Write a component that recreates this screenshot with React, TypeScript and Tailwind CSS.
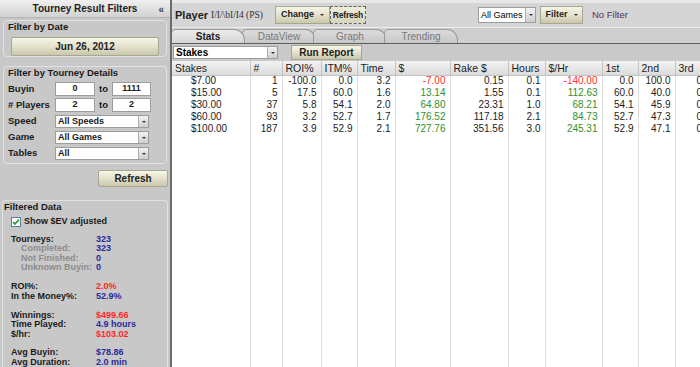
import React from "react";

const rows = [
  { stake: "$7.00", n: "1", roi: "-100.0", itm: "0.0", time: "3.2", usd: "-7.00", rake: "0.15", hours: "0.1", hr: "-140.00", first: "0.0", second: "100.0", third: "0.0" },
  { stake: "$15.00", n: "5", roi: "17.5", itm: "60.0", time: "1.6", usd: "13.14", rake: "1.55", hours: "0.1", hr: "112.63", first: "60.0", second: "40.0", third: "0.0" },
  { stake: "$30.00", n: "37", roi: "5.8", itm: "54.1", time: "2.0", usd: "64.80", rake: "23.31", hours: "1.0", hr: "68.21", first: "54.1", second: "45.9", third: "0.0" },
  { stake: "$60.00", n: "93", roi: "3.2", itm: "52.7", time: "1.7", usd: "176.52", rake: "117.18", hours: "2.1", hr: "84.73", first: "52.7", second: "47.3", third: "0.0" },
  { stake: "$100.00", n: "187", roi: "3.9", itm: "52.9", time: "2.1", usd: "727.76", rake: "351.56", hours: "3.0", hr: "245.31", first: "52.9", second: "47.1", third: "0.0" },
];

const columns = [
  { label: "Stakes", w: 78 },
  { label: "#", w: 32 },
  { label: "ROI%", w: 39 },
  { label: "ITM%", w: 36 },
  { label: "Time", w: 38 },
  { label: "$", w: 55 },
  { label: "Rake $", w: 58 },
  { label: "Hours", w: 37 },
  { label: "$/Hr", w: 57 },
  { label: "1st", w: 36 },
  { label: "2nd", w: 37 },
  { label: "3rd", w: 40 },
];

const beige = "bg-gradient-to-b from-[#f6f5e8] via-[#e4e2cc] to-[#c9c7ab] border border-[#a9a790] font-bold text-[#222]";

function DropArrow() {
  return (
    <div className="w-[10px] h-full border-l border-[#b0b0b0] bg-gradient-to-b from-[#f2f2f2] to-[#d0d0d0] flex items-center justify-center">
      <div className="w-0 h-0 border-l-[2px] border-r-[2px] border-t-[2px] border-l-transparent border-r-transparent border-t-[#333]" />
    </div>
  );
}

function Select({ text, w, bold = true }: { text: string; w: string; bold?: boolean }) {
  return (
    <div className={`${w} h-full bg-white border border-[#9c9c9c] flex items-center`}>
      <span className={`flex-1 pl-[2px] leading-none whitespace-nowrap overflow-hidden ${bold ? "font-bold" : ""}`}>{text}</span>
      <DropArrow />
    </div>
  );
}

function Stat({ label, value, tone = "blue", sub = false }: { label: string; value: string; tone?: "blue" | "red"; sub?: boolean }) {
  const color = tone === "red" ? "text-[#ff2626]" : "text-[#2a2a9c]";
  return (
    <div className="flex h-[9.5px] items-center leading-none">
      <span className={`w-[85px] ${sub ? "pl-[10px] text-[#8c8c8c]" : "text-[#1a1a1a]"}`}>{label}</span>
      <span className={color}>{value}</span>
    </div>
  );
}

function Sidebar() {
  return (
    <aside className="w-[170px] h-full bg-[#c8c8c8] flex flex-col text-[9px] font-bold text-[#1a1a1a] overflow-hidden">
      <div className="h-[18px] shrink-0 bg-gradient-to-b from-[#f0f0f0] to-[#d2d2d2] border-b border-[#b4b4b4] flex items-center relative">
        <span className="w-full text-center text-[10px] text-[#222]">Tourney Result Filters</span>
        <span className="absolute right-[6px] top-[2px] text-[10px] text-[#444]">«</span>
      </div>

      <div className="mt-[2px] mx-[3px] h-[38px] border border-[#e2e2e2] rounded-[4px] flex flex-col">
        <div className="pl-[4px] pt-[1px] leading-[10px] text-[9.5px]">Filter by Date</div>
        <div className={`mt-[5px] mx-[7px] h-[19px] rounded-[2px] flex items-center justify-center text-[10px] ${beige}`}>Jun 26, 2012</div>
      </div>

      <div className="mt-[9px] mx-[3px] border border-[#e2e2e2] rounded-[4px] flex flex-col pb-[3px]">
        <div className="pl-[4px] pt-[1px] leading-[10px] text-[9.5px]">Filter by Tourney Details</div>
        <div className="mt-[4px] h-[14px] flex items-center pl-[4px]">
          <span className="w-[47px] text-[9.5px]">Buyin</span>
          <div className="w-[40px] h-full bg-white border border-[#9c9c9c] flex items-center justify-center">0</div>
          <span className="w-[17px] text-center text-[9.5px]">to</span>
          <div className="w-[39px] h-full bg-white border border-[#9c9c9c] flex items-center justify-center">1111</div>
        </div>
        <div className="mt-[2px] h-[14px] flex items-center pl-[4px]">
          <span className="w-[47px] text-[9.5px]"># Players</span>
          <div className="w-[40px] h-full bg-white border border-[#9c9c9c] flex items-center justify-center">2</div>
          <span className="w-[17px] text-center text-[9.5px]">to</span>
          <div className="w-[39px] h-full bg-white border border-[#9c9c9c] flex items-center justify-center">2</div>
        </div>
        {["All Speeds", "All Games", "All"].map((v, i) => (
          <div key={v} className="mt-[3px] h-[13px] flex items-center pl-[4px]">
            <span className="w-[47px] text-[9.5px]">{["Speed", "Game", "Tables"][i]}</span>
            <Select text={v} w="w-[94px]" />
          </div>
        ))}
      </div>

      <div className={`mt-[6px] ml-auto mr-[2px] w-[70px] h-[17px] rounded-[2px] flex items-center justify-center text-[10px] ${beige}`}>Refresh</div>

      <div className="mt-[13px] mx-[2px] flex-1 border border-[#e2e2e2] border-b-0 rounded-t-[4px] flex flex-col">
        <div className="pl-[1px] pt-[1px] leading-[10px] text-[9.5px]">Filtered Data</div>
        <div className="mt-[3px] ml-[8px] flex items-center gap-[3px]">
          <div className="w-[10px] h-[10px] bg-white border border-[#5a7aa0] flex items-center justify-center">
            <svg width="8" height="8" viewBox="0 0 8 8"><path d="M1 4 L3 6 L7 1.5" stroke="#1f9a1f" strokeWidth="1.6" fill="none" /></svg>
          </div>
          <span className="text-[9px]">Show $EV adjusted</span>
        </div>
        <div className="mt-[6px] pl-[8px] flex flex-col">
          <Stat label="Tourneys:" value="323" />
          <Stat label="Completed:" value="323" sub />
          <Stat label="Not Finished:" value="0" sub />
          <Stat label="Unknown Buyin:" value="0" sub />
          <div className="h-[9.5px]" />
          <Stat label="ROI%:" value="2.0%" tone="red" />
          <Stat label="In the Money%:" value="52.9%" />
          <div className="h-[9.5px]" />
          <Stat label="Winnings:" value="$499.66" tone="red" />
          <Stat label="Time Played:" value="4.9 hours" />
          <Stat label="$/hr:" value="$103.02" tone="red" />
          <div className="h-[9px]" />
          <Stat label="Avg Buyin:" value="$78.86" />
          <Stat label="Avg Duration:" value="2.0 min" />
        </div>
      </div>
    </aside>
  );
}

function Tabs() {
  const tabs = ["Stats", "DataView", "Graph", "Trending"];
  return (
    <div className="h-[15px] shrink-0 bg-[#cfcfcf] flex items-end">
      {tabs.map((t, i) => (
        <div
          key={t}
          className={`${i === 0 ? "-ml-[1px] z-10 bg-gradient-to-b from-[#ececec] to-[#d6d6d6] font-bold text-[#222]" : "-ml-[3px] bg-gradient-to-b from-[#dcdcdc] to-[#c8c8c8] text-[#7a7a7a]"} w-[74px] h-[14px] border border-b-0 border-[#9a9a9a] rounded-tl-[5px] rounded-tr-[11px] flex items-center justify-center text-[10px] leading-none`}
        >
          {t}
        </div>
      ))}
    </div>
  );
}

function ReportTable() {
  const red = "text-[#ff3030]";
  const green = "text-[#2f8f2f]";
  return (
    <table className="table-fixed border-collapse h-full bg-white text-[10px] text-[#1c1c1c]" style={{ width: 543 }}>
      <colgroup>
        {columns.map((c) => (
          <col key={c.label} style={{ width: c.w }} />
        ))}
      </colgroup>
      <thead>
        <tr className="h-[14px] bg-gradient-to-b from-[#f2f2f2] to-[#dcdcdc]">
          {columns.map((c) => (
            <th key={c.label} className="border-r border-b border-[#c4c4c4] px-[3px] text-left font-normal text-[10.5px] leading-none">{c.label}</th>
          ))}
        </tr>
      </thead>
      <tbody>
        {rows.map((r) => {
          const neg = r.usd.startsWith("-");
          const cells = [r.n, r.roi, r.itm, r.time, r.usd, r.rake, r.hours, r.hr, r.first, r.second, r.third];
          return (
            <tr key={r.stake} className="h-[12px] leading-none">
              <td className="border-r border-[#dedede] pl-[19px]">{r.stake}</td>
              {cells.map((v, i) => (
                <td key={i} className={`border-r border-[#dedede] px-[4px] text-right whitespace-nowrap ${i === 4 || i === 7 ? (neg ? red : green) : ""}`}>{v}</td>
              ))}
            </tr>
          );
        })}
        <tr className="h-full">
          {columns.map((c) => (
            <td key={c.label} className="border-r border-[#dedede]" />
          ))}
        </tr>
      </tbody>
    </table>
  );
}

function Main() {
  return (
    <main className="flex-1 h-full flex flex-col overflow-hidden bg-[#d4d4d4]">
      <div className="h-[28px] shrink-0 border-t-[3px] border-[#e8e8e8] border-b border-b-[#ededed] bg-[#d5d5d5] flex items-center pl-[3px] text-[9px]">
        <span className="w-[36px] font-bold text-[11px] text-[#222]">Player</span>
        <span className="w-[64px] text-[9.5px] text-[#333] font-['Liberation_Serif',serif] whitespace-nowrap">I/I/\bI/I4 (PS)</span>
        <div className={`w-[55px] h-[18px] flex items-center justify-center gap-[6px] ${beige}`}>
          <span>Change</span>
          <div className="w-0 h-0 border-l-[2px] border-r-[2px] border-t-[2px] border-l-transparent border-r-transparent border-t-[#333]" />
        </div>
        <div className="w-[36px] h-[18px] flex items-center justify-center bg-gradient-to-b from-[#efeedd] to-[#d6d4bc] border border-dashed border-[#666] font-bold text-[#222] text-[8.5px] tracking-[-0.2px]">Refresh</div>
        <div className="ml-[112px] h-[16px]">
          <Select text="All Games" w="w-[58px]" bold={false} />
        </div>
        <div className={`ml-[4px] w-[43px] h-[18px] flex items-center justify-center gap-[6px] ${beige}`}>
          <span>Filter</span>
          <div className="w-0 h-0 border-l-[2px] border-r-[2px] border-t-[2px] border-l-transparent border-r-transparent border-t-[#333]" />
        </div>
        <span className="ml-[9px] text-[#5a2f5a] text-[9.5px]">No Filter</span>
      </div>
      <Tabs />
      <div className="h-[1px] shrink-0 bg-[#5e5e5e]" />
      <div className="h-[17px] shrink-0 bg-[#c9c9c9] flex items-center pl-[1px] text-[10px]">
        <div className="h-[13px]">
          <Select text="Stakes" w="w-[105px]" />
        </div>
        <div className={`ml-[13px] w-[71px] h-[15px] flex items-center justify-center ${beige}`}>Run Report</div>
      </div>
      <div className="flex-1 min-h-0 overflow-hidden bg-white">
        <ReportTable />
      </div>
    </main>
  );
}

export default function App() {
  return (
    <div className="w-[700px] h-[367px] flex overflow-hidden font-['Liberation_Sans',Arial,sans-serif] select-none">
      <Sidebar />
      <div className="w-[2px] h-full bg-[#6c6c6c]" />
      <Main />
    </div>
  );
}
